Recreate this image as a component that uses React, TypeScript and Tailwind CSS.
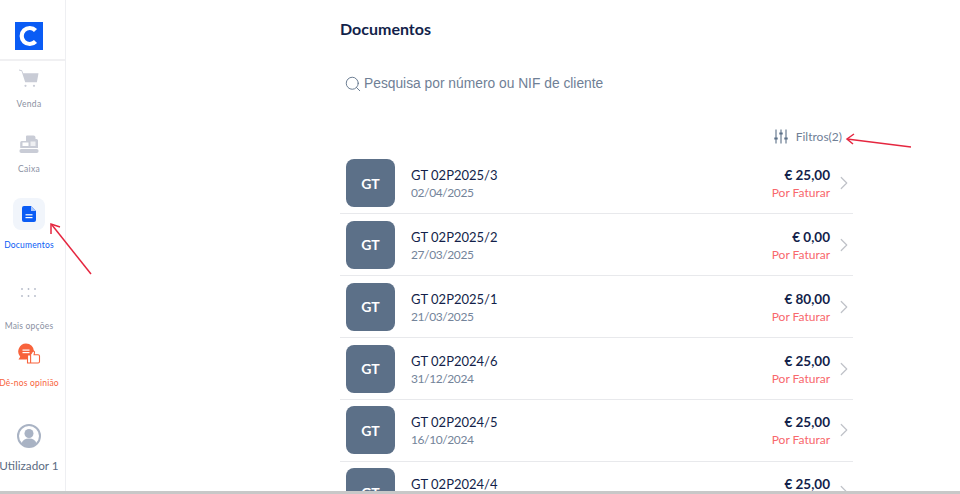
import { ChevronRight, Search } from "lucide-react";

const docs = [
  { number: "GT 02P2025/3", date: "02/04/2025", total: "€ 25,00" },
  { number: "GT 02P2025/2", date: "27/03/2025", total: "€ 0,00" },
  { number: "GT 02P2025/1", date: "21/03/2025", total: "€ 80,00" },
  { number: "GT 02P2024/6", date: "31/12/2024", total: "€ 25,00" },
  { number: "GT 02P2024/5", date: "16/10/2024", total: "€ 25,00" },
  { number: "GT 02P2024/4", date: "", total: "€ 25,00" },
];

const Sidebar = () => (
  <aside className="w-[66px] h-full shrink-0 border-r border-[#eeeff2] flex flex-col">
    <div className="h-[61px] shrink-0 border-b-2 border-[#f0f0f2] pt-[22px] pl-[15px]">
      <div className="w-[28px] h-[28px] bg-[#0a5cf5] flex items-center justify-center">
        <svg width="22" height="22" viewBox="0 0 22 22" fill="none">
          <path d="M17.500 5.500A8 8 0 1 0 17.500 16.500" stroke="#fff" strokeWidth="4.200" />
        </svg>
      </div>
    </div>

    <div className="w-[58px] flex flex-col">
      <div className="h-[65px] shrink-0 flex flex-col items-center pt-[8px]">
        <svg width="20" height="20" viewBox="0 0 20 20" fill="#c9ccd6">
          <path d="M0 0.500l3 .8 1.200 3H19.500l-1.600 9H6.200L2.600 2.200 0 1.600z" />
          <circle cx="6.500" cy="16.800" r="1.100" />
          <circle cx="15" cy="16.800" r="1.100" />
        </svg>
        <span className="mt-[8px] text-[8.500px] leading-[14px] tracking-[0.300px] text-[#8a90a2]">Venda</span>
      </div>

      <div className="h-[65px] shrink-0 flex flex-col items-center pt-[9px]">
        <svg width="20" height="19" viewBox="0 0 20 19" fill="#c9ccd6">
          <path d="M8 0.500h6.500a2 2 0 0 1 2 2V4h1a1.500 1.500 0 0 1 1.500 1.500V13H1.200V7.500A1.500 1.500 0 0 1 2.700 6H7V1.500a1 1 0 0 1 1-1z" />
          <rect x="0.400" y="14" width="19.200" height="4" rx="2" />
          <rect x="3.500" y="7.500" width="6" height="3.500" fill="#fff" />
          <rect x="11.500" y="6.500" width="5" height="4.500" fill="#fff" opacity="0.700" />
        </svg>
        <span className="mt-[8px] text-[8.500px] leading-[14px] tracking-[0.300px] text-[#8a90a2]">Caixa</span>
      </div>

      <div className="h-[72px] shrink-0 flex flex-col items-center pt-[7px]">
        <div className="w-[32px] h-[32px] rounded-lg bg-[#f1f5fb] flex items-center justify-center">
          <svg width="14" height="16" viewBox="0 0 14 16" fill="#0a5cf5">
            <path d="M2 0h7l5 5v9a2 2 0 0 1-2 2H2a2 2 0 0 1-2-2V2a2 2 0 0 1 2-2z" />
            <path d="M9 0v5h5z" fill="#a9c6fb" />
            <rect x="3.500" y="8.200" width="7" height="1.200" fill="#fff" />
            <rect x="3.500" y="11" width="7" height="1.200" fill="#fff" />
          </svg>
        </div>
        <span className="mt-[8px] text-[8.500px] leading-[14px] tracking-[0.200px] text-[#0a5cf5] whitespace-nowrap">Documentos</span>
      </div>

      <div className="h-[80px] shrink-0 flex flex-col items-center pt-[24px]">
        <svg width="16" height="12" viewBox="0 0 16 12" fill="#b4bac8">
          {[1, 7.500, 14].map((x) => (
            <g key={x}>
              <circle cx={x} cy="2" r="0.900" />
              <circle cx={x} cy="9" r="0.900" />
            </g>
          ))}
        </svg>
        <span className="mt-[20px] text-[8.500px] leading-[14px] tracking-[0.200px] text-[#8a90a2] whitespace-nowrap">Mais opções</span>
      </div>

      <div className="h-[81px] shrink-0 flex flex-col items-center">
        <svg width="24" height="21" viewBox="0 0 24 21">
          <path d="M9 0.500a8 8 0 0 1 8 8 8 8 0 0 1-8 8H1.500l1.700-2.800A8 8 0 0 1 9 0.500z" fill="#f8633c" />
          <rect x="5.500" y="6.500" width="7" height="1.200" fill="#fff" />
          <rect x="5.500" y="9" width="7" height="1.200" fill="#fff" />
          <path d="M10.500 12h2.800l2.200-3.500c1-.9 2.200-.2 2 1l-.4 2.200h4c.8 0 1.400.6 1.400 1.400v5.500c0 .8-.6 1.400-1.400 1.400H10.500z" fill="#fff" stroke="#f8633c" strokeWidth="1.100" />
          <path d="M13.600 12v8" stroke="#f8633c" strokeWidth="1.100" />
        </svg>
        <span className="mt-[12px] text-[8.500px] leading-[14px] tracking-[0.200px] text-[#f8633c] whitespace-nowrap">Dê-nos opinião</span>
      </div>

      <div className="flex flex-col items-center">
        <svg width="24" height="24" viewBox="0 0 24 24">
          <circle cx="12" cy="12" r="11" fill="#fff" stroke="#a9b3c4" strokeWidth="2" />
          <circle cx="12" cy="9.500" r="4.500" fill="#a9b3c4" />
          <path d="M4.500 19.500c1-3.500 3.500-5 7.500-5s6.500 1.500 7.500 5a11 11 0 0 1-15 0z" fill="#a9b3c4" />
        </svg>
        <span className="mt-[8px] text-[11.700px] leading-[18px] text-[#5b6b82] whitespace-nowrap">Utilizador 1</span>
      </div>
    </div>
  </aside>
);

const DocRow = ({ number, date, total }: { number: string; date: string; total: string }) => (
  <div className="h-[61.800px] shrink-0 border-b border-[#e8e9ec] flex items-start pl-[6px] pt-[6.500px]">
    <div className="w-[49px] h-[48px] shrink-0 rounded-lg bg-[#5c7088] flex items-center justify-center text-white text-[14px] font-bold">
      GT
    </div>
    <div className="ml-[16px] pt-[7px]">
      <div className="text-[13px] leading-[18px] text-[#131f4a]">{number}</div>
      <div className="text-[12px] leading-[18px] tracking-[-0.400px] text-[#74849a]">{date}</div>
    </div>
    <div className="ml-auto pt-[7px] text-right">
      <div className="text-[13.500px] leading-[18px] font-bold text-[#131f4a]">{total}</div>
      <div className="text-[12px] leading-[18px] text-[#f8676d]">Por Faturar</div>
    </div>
    <ChevronRight size={22} strokeWidth={1.300} className="ml-[3px] -mr-[2px] mt-[13px] text-[#bfc2c8]" />
  </div>
);

export default function App() {
  return (
    <div className="relative flex h-[494px] w-[960px] overflow-hidden bg-white font-['Lato','Liberation_Sans',sans-serif] border-b-[3px] border-[#c8c8c8]">
      <Sidebar />

      <main className="ml-[274px] w-[513px] flex flex-col">
        <h1 className="mt-[19px] text-[16px] leading-[20px] font-bold text-[#131f4a]">Documentos</h1>

        <div className="mt-[35px] ml-[4px] flex items-center gap-[2px] h-[24px]">
          <Search size={18} strokeWidth={1.200} className="text-[#5c7088]" />
          <span className="font-['Liberation_Sans',sans-serif] text-[13.800px] text-[#6f8096]">
            Pesquisa por número ou NIF de cliente
          </span>
        </div>

        <div className="mt-[33px] h-[20px] flex items-center justify-end pr-[11px]">
          <svg width="14" height="15" viewBox="0 0 14 15" fill="none" stroke="#5c7088" strokeWidth="1.100">
            <path d="M2 0.500V14.500M7 0.500V14.500M12 0.500V14.500" />
            <path d="M0.300 9.500H3.700M5.300 4.500H8.700M10.300 9.500H13.700" strokeWidth="1.800" />
          </svg>
          <span className="ml-[8px] text-[12px] text-[#6f8096]">Filtros(2)</span>
        </div>

        <div className="mt-[7px] flex flex-col">
          {docs.map((doc) => (
            <DocRow key={doc.number} {...doc} />
          ))}
        </div>
      </main>

      {/* annotation arrows */}
      <svg className="absolute left-0 top-0" width="960" height="491" fill="none" stroke="#e5263f" strokeWidth="1.500">
        <path d="M91 274 52 225" />
        <path d="M51 234 51 224 60 227" />
        <path d="M911 147 847 139" />
        <path d="M854 134 847 139 853 144" />
      </svg>
    </div>
  );
}
